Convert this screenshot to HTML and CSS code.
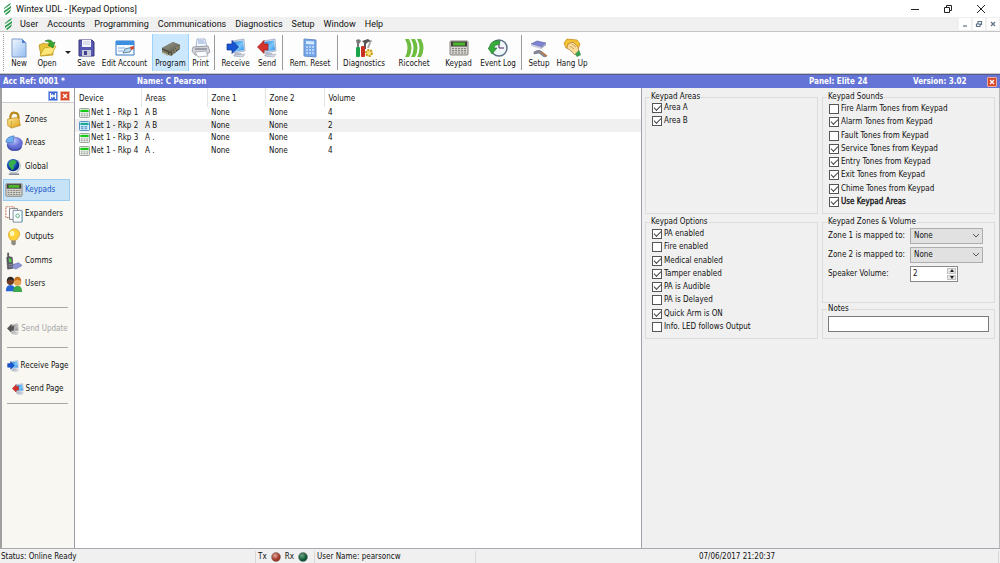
FILE: index.html
```html
<!DOCTYPE html>
<html lang="en">
<head>
<meta charset="utf-8">
<title>Wintex UDL - [Keypad Options]</title>
<link rel="stylesheet" href="styles.css">
</head>
<body>
<svg class="defs" aria-hidden="true">
  <defs>
    <linearGradient id="gPage" x1="0" y1="0" x2="1" y2="1"><stop offset="0" stop-color="#f2f8ff"/><stop offset="1" stop-color="#94bdf0"/></linearGradient>
    <linearGradient id="gScreen" x1="0" y1="0" x2="1" y2="1"><stop offset="0" stop-color="#1d7fe0"/><stop offset=".55" stop-color="#7cc6fa"/><stop offset="1" stop-color="#2a8be6"/></linearGradient>
    <linearGradient id="gGold" x1="0" y1="0" x2="1" y2="1"><stop offset="0" stop-color="#fff09a"/><stop offset="1" stop-color="#dc9a14"/></linearGradient>
    <linearGradient id="gChip" x1="0" y1="0" x2="1" y2="1"><stop offset="0" stop-color="#a3a28f"/><stop offset="1" stop-color="#55554a"/></linearGradient>
    <radialGradient id="gRed" cx=".4" cy=".35"><stop offset="0" stop-color="#e3a596"/><stop offset="1" stop-color="#9b3020"/></radialGradient>
    <radialGradient id="gGreen" cx=".4" cy=".35"><stop offset="0" stop-color="#6da383"/><stop offset="1" stop-color="#0b5430"/></radialGradient>
    <radialGradient id="gPie" cx=".4" cy=".3"><stop offset="0" stop-color="#c9ceff"/><stop offset="1" stop-color="#6670d8"/></radialGradient>
    <radialGradient id="gGlobe" cx=".4" cy=".35"><stop offset="0" stop-color="#5aa8ff"/><stop offset="1" stop-color="#06308f"/></radialGradient>
    <symbol id="logo" viewBox="0 0 10 12"><g fill="#259a4b"><path d="M1 5 6 1 8 0 7 2 1 6z"/><path d="M1 8 8 3v2L1 10z"/><path d="M2 11 8 6 7 9 3 12z"/></g></symbol>
    <symbol id="pc" viewBox="0 0 20 20"><path d="M9 15h6l1 2 2 1-5 1-6-1z" fill="#b9c0cc"/><path d="M6 3 18 1l1 12-11 2z" fill="#d4dcea" stroke="#8796b4" stroke-width=".6"/><path d="M7.500 4 17 2.500l1 9.500-9 1.500z" fill="url(#gScreen)"/><path d="m9 17 10-1-2 3-9-1z" fill="#d6dae4" stroke="#9aa2b4" stroke-width=".5"/></symbol>
    <symbol id="receive" viewBox="0 0 20 20"><use href="#pc"/><path d="M1 6h5V2.500L12.500 9 6 15.500V12H1z" fill="#1755d2" stroke="#0b3393" stroke-width=".7"/></symbol>
    <symbol id="send" viewBox="0 0 20 20"><use href="#pc"/><path d="M11 6H7V2.500L.5 9 7 15.500V12h4z" fill="#d6322c" stroke="#97201b" stroke-width=".7"/></symbol>
    <symbol id="keypad" viewBox="0 0 20 20"><rect x="1" y="3" width="18" height="14" rx="1" fill="#d4d2cc" stroke="#85837d"/><rect x="2" y="3.500" width="16" height="5" fill="#403f3d"/><rect x="4" y="4.500" width="12" height="3" fill="#49b92b"/><path d="M3 10.500h14M3 12.700h14M3 15h14" stroke="#86847e" stroke-width="1.200" stroke-dasharray="2 1"/></symbol>
    <symbol id="mini" viewBox="0 0 12 11"><rect x=".5" y=".5" width="11" height="10" rx="1" fill="#f2f5f2" stroke="#909890"/><path d="M1.500 2h9v2.500h-9z" fill="#16c916"/><path d="M2 6.500h8M2 8.500h8" stroke="#858b85" stroke-dasharray="2 1"/></symbol>
    <symbol id="miniSel" viewBox="0 0 12 11"><rect x=".5" y=".5" width="11" height="10" rx="1" fill="#dff1ff" stroke="#4487bd"/><path d="M1.500 2h9v2.500h-9z" fill="#1caa97"/><path d="M2 6.500h8M2 8.500h8" stroke="#468dc4" stroke-width="1.300" stroke-dasharray="3 1"/></symbol>
  </defs>
</svg>
<div class="app">
  <header class="titlebar">
    <svg class="logo"><use href="#logo"/></svg>
    <h1 class="title">Wintex UDL - [Keypad Options]</h1>
    <div class="winbtns">
      <button aria-label="Minimise"><svg viewBox="0 0 10 10"><path d="M1 5.500h8"/></svg></button>
      <button aria-label="Restore"><svg viewBox="0 0 10 10"><path d="M1.500 3.500h5v5h-5zM3.500 3.500v-2h5v5h-2"/></svg></button>
      <button aria-label="Close"><svg viewBox="0 0 10 10"><path d="m1 1 8 8M9 1 1 9"/></svg></button>
    </div>
  </header>
  <nav class="menubar">
    <svg class="logo"><use href="#logo"/></svg>
    <button>User</button><button>Accounts</button><button>Programming</button><button>Communications</button><button>Diagnostics</button><button>Setup</button><button>Window</button><button>Help</button>
    <div class="mdibtns">
      <button aria-label="Minimise child"><svg viewBox="0 0 8 8"><path d="M2 6h4"/></svg></button>
      <button aria-label="Restore child"><svg viewBox="0 0 8 8"><path d="M1.500 4h3.500v2.500H1.500zM3 3.500v-2h3.500v3H5.500"/></svg></button>
      <button aria-label="Close child"><svg viewBox="0 0 8 8"><path d="m2 2 4 4M6 2 2 6"/></svg></button>
    </div>
  </nav>
  <div class="toolbar" role="toolbar">
    <span class="grip"></span>
    <button class="tool w28"><svg viewBox="0 0 20 20"><path d="M3 1h10l4 4v14H3z" fill="url(#gPage)" stroke="#7d9cc8"/><path d="M13 1v4h4z" fill="#4d80cc"/></svg>New</button>
    <button class="tool w28"><svg viewBox="0 0 20 20"><path d="M2 7 7 5l2 1 6-1 1 12-12 1z" fill="#e9c437" stroke="#b58a16" stroke-width=".7"/><path d="m3 18 4-8 12-2-4 8z" fill="#fbe77a" stroke="#c39a1d" stroke-width=".7"/><path d="M8 3q6-3 8 2l2-1-2 6-5-3 2-1q-1-3-5-3z" fill="#38a52f" stroke="#1c7318" stroke-width=".6"/></svg>Open</button>
    <button class="drop" aria-label="Open recent"></button>
    <button class="tool w22"><svg viewBox="0 0 20 20"><path d="M3 2h13l2 2v14H3z" fill="#5657b0" stroke="#35367d"/><path d="M6 2h9v7H6z" fill="#f2f4fb"/><path d="M7 4h7M7 6h7" stroke="#b4bad2" stroke-width=".7"/><path d="M6 12h9v6H6z" fill="#c8cbdc"/><path d="M8 13h3v4H8z" fill="#40418d"/></svg>Save</button>
    <button class="tool w55"><svg viewBox="0 0 20 20"><path d="M1 3h18v14H1z" fill="#f5faff" stroke="#3579c6"/><path d="M1 3h18v4H1z" fill="#3a8fe0"/><path d="M3 10h7M3 13h5" stroke="#7aaede"/><path d="m8 15 2-4 8-2-3 5z" fill="#b9dcf2" stroke="#4a6d8c" stroke-width=".8"/><path d="m15 9 4-1v3l-3 1z" fill="#d04b31"/></svg>Edit Account</button>
    <button class="tool w37 active"><svg viewBox="0 0 20 20"><path d="m1 10 11-6 7 3v4l-9 7-9-4z" fill="#4b4a3c"/><path d="m1 10 11-6 7 3-9 7z" fill="url(#gChip)"/><path d="M2 12v4m2-3v4m2-3v4m3-3v3m3-5v3m2-5v3m2-5v3m2-4v3" stroke="#b5ad84"/></svg>Program</button>
    <button class="tool w23"><svg viewBox="0 0 20 20"><path d="M6 1h8l2 8H5z" fill="#f2f6fe" stroke="#8497bc" stroke-width=".7"/><path d="M7 3h6M7 5h7" stroke="#8aa7d5"/><path d="m2 9 15-1 2 6-4 3H4l-3-4z" fill="#d2d4da" stroke="#848790" stroke-width=".7"/><path d="M4 11h12" stroke="#666a74"/><path d="m4 14 11-1 2 5-10 1z" fill="#fafbff" stroke="#969ba8" stroke-width=".7"/></svg>Print</button>
    <span class="sep"></span>
    <button class="tool w37"><svg><use href="#receive"/></svg>Receive</button>
    <button class="tool w26"><svg><use href="#send"/></svg>Send</button>
    <span class="sep"></span>
    <button class="tool w50"><svg viewBox="0 0 20 20"><path d="m4 1 12 1v17L4 18z" fill="#75a8ea" stroke="#668fca"/><path d="m6 3 8 .5v3L6 6z" fill="#d6eaff"/><path d="M6 9h8M6 12h8M6 15h8" stroke="#b4d2f8" stroke-width="1.800" stroke-dasharray="2 1"/></svg>Rem. Reset</button>
    <span class="sep"></span>
    <button class="tool w48"><svg viewBox="0 0 20 20"><path d="M2 2q4-2 5 1L5 6v5H3V6z" fill="#777"/><path d="m8 3 6-2 4 3-4 0-2 2v5h-2V5z" fill="#555"/><path d="m17 2-3 8" stroke="#aaa" stroke-width="2"/><rect x="2" y="9" width="4" height="10" rx="1" fill="#1aa54a"/><rect x="7" y="8" width="4" height="11" rx="1" fill="#ca3022"/><circle cx="15" cy="15" r="3" fill="#f6df79" stroke="#c79a16" stroke-width="2" stroke-dasharray="2 1"/></svg>Diagnostics</button>
    <button class="tool w52"><svg viewBox="0 0 20 20"><path d="M1 1h4q5 9 0 18H1q5-9 0-18zM7 1h4q5 9 0 18H7q5-9 0-18zM13 1h4q5 9 0 18h-4q5-9 0-18z" fill="#6cbd41"/></svg>Ricochet</button>
    <button class="tool w37"><svg><use href="#keypad"/></svg>Keypad</button>
    <button class="tool w42"><svg viewBox="0 0 20 20"><circle cx="11" cy="10" r="8" fill="#eff6fa" stroke="#5d7287" stroke-width="1.500"/><path d="M11 10V4m0 6h5" stroke="#526"/><path d="M1 10q2-9 11-7l-1 4q-4-1-5 3l3 0-5 6-4-6z" fill="#37ab3c" stroke="#1a7222" stroke-width=".6"/></svg>Event Log</button>
    <span class="sep"></span>
    <button class="tool w30"><svg viewBox="0 0 20 20"><path d="m2 6 6-3 9 2-5 4z" fill="#7c83d1" stroke="#555b9e" stroke-width=".6"/><path d="m2 6 10 3v2L2 8z" fill="#c8cade"/><path d="M12 11 17 7V5l-5 4z" fill="#999fbd"/><path d="M5 14q4-3 7-1l6 5-3 1-5-4-5 1z" fill="#898b98" stroke="#555768" stroke-width=".5"/><path d="m12 14 6 4" stroke="#c77a35" stroke-width="1.500"/></svg>Setup</button>
    <button class="tool w36"><svg viewBox="0 0 20 20"><path d="m2 5 3-4 10 1 3 4-2 5-3 1-9-2z" fill="#f4c334" stroke="#bc8514" stroke-width=".7"/><path d="m6 6 5-2 5 5 1 5-4 3-4-4-4-3z" fill="#fadd9c" stroke="#ad762f" stroke-width=".7"/><path d="m8 8 4 3M10 6l4 3" stroke="#ad762f" stroke-width=".6"/><path d="m13 16 4-4 2 5-4 2z" fill="#3b9c52"/></svg>Hang Up</button>
  </div>
  <section class="account">
    <span class="ref">Acc Ref: 0001 *</span><span class="name">Name: C Pearson</span><span class="panelname">Panel: Elite 24</span><span class="version">Version: 3.02</span>
    <button class="close" aria-label="Close page"><svg viewBox="0 0 8 8"><path d="m2 2 4 4M6 2 2 6"/></svg></button>
  </section>
  <main class="main">
    <aside class="sidebar">
      <div class="sidetop">
        <button class="pin" aria-label="Pin"><svg viewBox="0 0 8 8"><path d="M1.500 1v6M6.500 1v6M2 4h4M4 2.500 2.500 4 4 5.500"/></svg></button>
        <button class="close" aria-label="Close sidebar"><svg viewBox="0 0 8 8"><path d="m2 2 4 4M6 2 2 6"/></svg></button>
      </div>
      <nav class="pages">
        <button><svg viewBox="0 0 20 20"><path d="M6 10V6q1-5 5-4 4 0 4 5v2" fill="none" stroke="#b98a1c" stroke-width="2.500"/><path d="m3 9 12-2 2 9-10 3-4-3z" fill="url(#gGold)" stroke="#b98418" stroke-width=".8"/><path d="M7 11v7" stroke="#be8d1b" stroke-width=".7"/></svg>Zones</button>
        <button><svg viewBox="0 0 20 20"><path d="M2 11q0 8 9 8 8 0 8-7z" fill="#4750b0"/><ellipse cx="11" cy="10" rx="8.500" ry="6.500" fill="url(#gPie)" stroke="#5b65c0" stroke-width=".6"/><path d="M9 10 1 9q0-6 9-7z" fill="#6eb0f2" stroke="#3f75bc" stroke-width=".7"/></svg>Areas</button>
        <button><svg viewBox="0 0 20 20"><path d="M5 17h10l1 2H4z" fill="#888d98"/><path d="M14 2q6 7 0 13-5 3-9 0" fill="none" stroke="#b8c0cc" stroke-width="1.300"/><circle cx="9" cy="8" r="6.800" fill="url(#gGlobe)"/><path d="M6 3q5-2 7 1l-2 3-2 1 1 3-2 3-3-5-1-3z" fill="#36b048"/></svg>Global</button>
        <button class="active"><svg><use href="#keypad"/></svg>Keypads</button>
        <button><svg viewBox="0 0 20 20"><path d="M1 2h9v12H1z" fill="#fff" stroke="#b65e44" stroke-dasharray="2 1"/><path d="M5 4h9v12H5z" fill="#fff" stroke="#777"/><path d="M9 6h10v13H9z" fill="#fafdff" stroke="#728696"/><circle cx="14" cy="12" r="2" fill="none" stroke="#51a775"/><path d="M19 7v11" stroke="#5aafd9" stroke-dasharray="2 1"/></svg>Expanders</button>
        <button><svg viewBox="0 0 20 20"><path d="M7 14Q3 10 4 6q2-5 7-5 6 1 5 7-1 3-4 6z" fill="#ffd13b" stroke="#d99c17" stroke-width=".8"/><ellipse cx="8" cy="6" rx="2.500" ry="3" fill="#fff7b9"/><path d="M7 14h5v4l-2 1.500L7 18z" fill="#8e8b83"/></svg>Outputs</button>
        <button><svg viewBox="0 0 20 20"><path d="M3 1v4l-1 1 1 13 6-1-1-12-4-1V1z" fill="#5b5d66" stroke="#3c3e45" stroke-width=".7"/><path d="m4 7 3 .5.500 4-3 0z" fill="#57ce4c"/><path d="M4 14h4M4 16h4" stroke="#a9abb4" stroke-width=".7"/><path d="m9 14 6-2 4 3-7 4-4-2z" fill="#8f96d6" stroke="#666db0" stroke-width=".7"/></svg>Comms</button>
        <button><svg viewBox="0 0 20 20"><path d="M1 18q0-7 5-7t6 7z" fill="#2764d4"/><circle cx="6" cy="7" r="4" fill="#713e25"/><path d="M2 7q0-5 4-5t4 4l-5-1z" fill="#302824"/><path d="M9 19q0-7 5-7t5 7z" fill="#3ea94a"/><circle cx="14" cy="8" r="4" fill="#e9a34e"/><path d="M10 7q0-5 4-5t4 5l-4-2z" fill="#c46e1e"/></svg>Users</button>
      </nav>
      <div class="actions">
        <button disabled><svg><use href="#send"/></svg>Send Update</button>
      </div>
      <div class="actions two">
        <button><svg><use href="#receive"/></svg>Receive Page</button>
        <button><svg><use href="#send"/></svg>Send Page</button>
      </div>
    </aside>
    <section class="list">
      <table>
        <thead><tr><th class="c1">Device</th><th class="c2">Areas</th><th class="c3">Zone 1</th><th class="c4">Zone 2</th><th>Volume</th></tr></thead>
        <tbody>
          <tr><td><span class="dev"><svg><use href="#mini"/></svg>Net 1 - Rkp 1</span></td><td>A B</td><td>None</td><td>None</td><td>4</td></tr>
          <tr class="sel"><td><span class="dev"><svg><use href="#miniSel"/></svg>Net 1 - Rkp 2</span></td><td>A B</td><td>None</td><td>None</td><td>2</td></tr>
          <tr><td><span class="dev"><svg><use href="#mini"/></svg>Net 1 - Rkp 3</span></td><td>A .</td><td>None</td><td>None</td><td>4</td></tr>
          <tr><td><span class="dev"><svg><use href="#mini"/></svg>Net 1 - Rkp 4</span></td><td>A .</td><td>None</td><td>None</td><td>4</td></tr>
        </tbody>
      </table>
    </section>
    <form class="options">
      <fieldset><legend>Keypad Areas</legend>
        <div class="checks short">
          <label><input type="checkbox" checked>Area A</label>
          <label><input type="checkbox" checked>Area B</label>
        </div>
      </fieldset>
      <fieldset><legend>Keypad Sounds</legend>
        <div class="checks">
          <label><input type="checkbox">Fire Alarm Tones from Keypad</label>
          <label><input type="checkbox" checked>Alarm Tones from Keypad</label>
          <label><input type="checkbox">Fault Tones from Keypad</label>
          <label><input type="checkbox" checked>Service Tones from Keypad</label>
          <label><input type="checkbox" checked>Entry Tones from Keypad</label>
          <label><input type="checkbox" checked>Exit Tones from Keypad</label>
          <label><input type="checkbox" checked>Chime Tones from Keypad</label>
          <label class="strong"><input type="checkbox" checked>Use Keypad Areas</label>
        </div>
      </fieldset>
      <fieldset><legend>Keypad Options</legend>
        <div class="checks">
          <label><input type="checkbox" checked>PA enabled</label>
          <label><input type="checkbox">Fire enabled</label>
          <label><input type="checkbox" checked>Medical enabled</label>
          <label><input type="checkbox" checked>Tamper enabled</label>
          <label><input type="checkbox" checked>PA is Audible</label>
          <label><input type="checkbox">PA is Delayed</label>
          <label><input type="checkbox" checked>Quick Arm is ON</label>
          <label><input type="checkbox">Info. LED follows Output</label>
        </div>
      </fieldset>
      <div class="stack">
        <fieldset class="zones"><legend>Keypad Zones &amp; Volume</legend>
          <div class="fields">
            <label for="z1">Zone 1 is mapped to:</label><select id="z1"><option>None</option></select>
            <label for="z2">Zone 2 is mapped to:</label><select id="z2"><option>None</option></select>
            <label for="vol">Speaker Volume:</label>
            <span class="spin"><input id="vol" type="text" value="2"><span class="arrows"><button type="button" class="up" aria-label="Increase"></button><button type="button" class="down" aria-label="Decrease"></button></span></span>
          </div>
        </fieldset>
        <fieldset><legend><label for="notes">Notes</label></legend><input id="notes" class="notes" type="text"></fieldset>
      </div>
    </form>
  </main>
  <footer class="status">
    <span class="s1">Status: Online Ready</span>
    <span class="s2">Tx <svg viewBox="0 0 10 10"><circle cx="5" cy="5" r="4.500" fill="url(#gRed)" stroke="#777" stroke-width=".5"/></svg>Rx <svg viewBox="0 0 10 10"><circle cx="5" cy="5" r="4.500" fill="url(#gGreen)" stroke="#777" stroke-width=".5"/></svg></span>
    <span class="s3">User Name: pearsoncw</span>
    <span class="s4">07/06/2017 21:20:37</span>
  </footer>
</div>
</body>
</html>
```
FILE: styles.css
```css
* { box-sizing: border-box; }
body { margin: 0; color: #111; font: 8px/10px "DejaVu Sans Condensed", "DejaVu Sans", sans-serif; font-stretch: condensed; }
button, input, select { margin: 0; padding: 0; border: 0; background: none; color: inherit; font: inherit; }
.defs { position: absolute; width: 0; height: 0; }
.app { display: flex; flex-direction: column; min-height: 100vh; background: #fff; }
.logo { width: 10px; height: 12px; flex: none; }

.titlebar { display: flex; align-items: center; height: 17px; padding: 0 14px 0 3px; gap: 3px; }
.title { margin: 0; font: 9px/12px Roboto, "Open Sans", sans-serif; }
.winbtns { display: flex; gap: 23px; margin-left: auto; }
.winbtns button, .winbtns svg { display: block; width: 10px; height: 10px; }
.winbtns path { fill: none; stroke: #222; }
.menubar { display: flex; align-items: center; height: 15px; padding: 0 1px 0 4px; gap: 9px; background: #f0f0f0; border-bottom: 1px solid #c4c4c4; font: 9px/12px Roboto, "Open Sans", sans-serif; }
.menubar .logo { margin-right: -3px; }
.mdibtns { display: flex; gap: 2px; margin-left: auto; }
.mdibtns button { width: 12px; height: 12px; background: #fff; }
.mdibtns svg { display: block; width: 8px; height: 8px; margin: 2px; }
.mdibtns path { fill: none; stroke: #5d7186; stroke-width: 1.2; }

.toolbar { display: flex; align-items: stretch; height: 42px; padding: 2px 0 2px 3px; background: #fdfdfd; border-bottom: 1px solid #c8c8c8; }
.grip { width: 2px; border-left: 1px dotted #999; }
.tool { display: flex; flex-direction: column; align-items: center; flex: none; padding-top: 4px; line-height: 12px; white-space: nowrap; border: 1px solid transparent; border-width: 0 1px; }
.tool svg { display: block; width: 20px; height: 20px; flex: none; }
.tool.active { background: #cce8ff; border-color: #99d1ff; }
.w22 { width: 22px; } .w23 { width: 23px; } .w26 { width: 26px; } .w28 { width: 28px; }
.w30 { width: 30px; } .w36 { width: 36px; } .w37 { width: 37px; } .w42 { width: 42px; }
.w48 { width: 48px; } .w50 { width: 50px; } .w52 { width: 52px; } .w55 { width: 55px; }
.drop { display: flex; align-items: center; justify-content: center; width: 14px; flex: none; }
.drop::before { content: ""; border: 3px solid transparent; border-top-color: #222; border-bottom: 0; }
.sep { width: 1px; margin: 1px 2px; background: #999; flex: none; }

.account { display: flex; align-items: center; height: 14px; padding: 0 3px; background: #6374d6; border-top: 1px solid #555d8c; color: #fff; font-weight: 700; white-space: nowrap; }
.ref { width: 134px; }
.name { flex: 1; }
.panelname { width: 104px; }
.version { width: 74px; }
.close { display: block; width: 10px; height: 10px; border: 1px solid #e9b1a0; background: #d9492c; border-radius: 1px; }
.close svg, .pin svg { display: block; width: 8px; height: 8px; }
.close path, .pin path { fill: none; stroke: #fff; stroke-width: 1.3; }
.pin { display: block; width: 10px; height: 10px; border: 1px solid #93aee6; background: #3d6bd3; border-radius: 1px; }

.main { display: flex; flex: 1; border-bottom: 1px solid #a8a8b0; }
.sidebar { width: 75px; flex: none; border-left: 2px solid #a0a0a0; border-right: 1px solid #9b9ba8; background: #f8f7f2; }
.sidetop { display: flex; justify-content: flex-end; gap: 2px; height: 15px; padding: 3px 4px 0 0; margin-bottom: 5px; background: #fff; border-bottom: 1px solid #ccc; }
.pages { display: grid; grid-auto-rows: 1fr; height: 188px; padding: 0 4px 0 1px; }
.pages button { display: flex; align-items: center; gap: 2px; height: 22px; align-self: center; padding-left: 1px; border: 1px solid transparent; text-align: left; line-height: 12px; }
.pages svg { width: 18px; height: 18px; flex: none; }
.pages .active { background: #c6e2f7; border-color: #99cdf2; color: #2257c8; }
.actions { display: flex; flex-direction: column; margin: 11px 6px 0 5px; padding: 15px 0 1px; border-top: 1px solid #a8a8a8; }
.actions.two { gap: 11px; margin-top: 11px; padding: 12px 0 8px; border-bottom: 1px solid #a8a8a8; }
.actions button { display: flex; align-items: center; justify-content: center; gap: 2px; height: 12px; white-space: nowrap; }
.actions svg { width: 12px; height: 12px; flex: none; }
.actions button:disabled { color: #a5a5a5; }
.actions button:disabled svg { filter: grayscale(1); }

.list { flex: 1; min-width: 0; background: #fff; }
table { width: 100%; border-collapse: collapse; table-layout: fixed; }
th, td { padding: 0 0 0 4px; font-weight: 400; text-align: left; white-space: nowrap; line-height: 12px; }
th { height: 19px; padding-top: 2px; border-right: 1px solid #e4e4e4; }
th:last-child { border-right: 0; }
.c1, .c2 { width: 66px; } .c3 { width: 58px; } .c4 { width: 59px; }
td { height: 12px; }
tr:nth-child(even) td { height: 13px; }
.sel { background: #f0f0f0; }
.dev { display: flex; align-items: center; gap: 1px; height: 12px; }
.dev svg { width: 11px; height: 10px; flex: none; }

.options { display: grid; grid-template-columns: 1fr 1fr; grid-template-rows: auto auto; gap: 3px 4px; align-content: start; width: 359px; flex: none; padding: 4px 4px 0 3px; border-left: 1px solid #a0a0a8; border-right: 1px solid #b8b8b8; background: #f0f0f0; }
fieldset { min-width: 0; margin: 0; padding: 0 5px 6px; border: 1px solid #dcdcdc; }
legend { margin-left: -1px; padding: 0 1px; height: 10px; }
.checks { display: flex; flex-direction: column; justify-content: space-between; height: 103px; margin-top: 2px; padding-left: 1px; }
.checks.short { height: 23px; margin-top: 1px; }
.checks label { display: flex; align-items: center; gap: 2px; height: 10px; white-space: nowrap; }
.strong { -webkit-text-stroke: 0.3px #111; }
input[type="checkbox"] { appearance: none; width: 10px; height: 10px; flex: none; border: 1px solid #555; background: #fff; }
input[type="checkbox"]:checked::before { content: ""; display: block; width: 6px; height: 3px; margin: 1px; border: solid #444; border-width: 0 0 1px 1px; rotate: -45deg; }
.stack { display: flex; flex-direction: column; gap: 1px; }
.zones { flex: 1; }
.fields { display: grid; grid-template-columns: 82px 73px; grid-auto-rows: 16px; gap: 3px 0; align-items: center; padding-top: 1px; }
select { appearance: none; width: 73px; height: 16px; padding: 0 3px; border: 1px solid #adadad; background: #e1e1e1 url("data:image/svg+xml,%3Csvg xmlns='http://www.w3.org/2000/svg' width='8' height='6'%3E%3Cpath d='m1 1 3 3 3-3' fill='none' stroke='%23555'/%3E%3C/svg%3E") no-repeat right 2px center; }
.spin { display: flex; width: 48px; height: 16px; border: 1px solid #8a8a8a; background: #fff; }
.spin input { flex: 1; min-width: 0; padding-left: 2px; }
.arrows { display: flex; flex-direction: column; gap: 1px; padding: 1px; }
.arrows button { display: flex; align-items: center; justify-content: center; flex: 1; width: 9px; background: #e4e4e4; border: 1px solid #c4c4c4; }
.arrows button::before { content: ""; border: 2px solid transparent; }
.arrows .up::before { border-bottom: 3px solid #222; border-top: 0; }
.arrows .down::before { border-top: 3px solid #222; border-bottom: 0; }
.notes { display: block; width: 100%; height: 16px; margin-top: 2px; padding: 0 3px; border: 1px solid #7a7a7a; background: #fff; }

.status { display: flex; align-items: stretch; height: 14px; padding: 2px 1px 0; background: #f0f0f0; line-height: 12px; white-space: nowrap; }
.status span { border-right: 1px solid #d8d8d8; }
.s1 { width: 255px; }
.s2 { display: flex; align-items: center; gap: 4px; width: 59px; padding-left: 2px; }
.s2 svg { width: 10px; height: 10px; }
.s3 { width: 161px; padding-left: 2px; }
.s4 { flex: 1; text-align: center; }
```
